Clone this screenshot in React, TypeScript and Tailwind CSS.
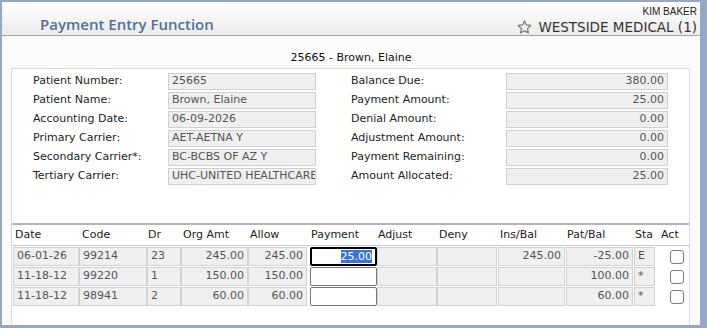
const font = { fontFamily: "'DejaVu Sans', Verdana, sans-serif" };

const leftFields = [
  ["Patient Number:", "25665"],
  ["Patient Name:", "Brown, Elaine"],
  ["Accounting Date:", "06-09-2026"],
  ["Primary Carrier:", "AET-AETNA Y"],
  ["Secondary Carrier*:", "BC-BCBS OF AZ Y"],
  ["Tertiary Carrier:", "UHC-UNITED HEALTHCARE"],
];

const rightFields = [
  ["Balance Due:", "380.00"],
  ["Payment Amount:", "25.00"],
  ["Denial Amount:", "0.00"],
  ["Adjustment Amount:", "0.00"],
  ["Payment Remaining:", "0.00"],
  ["Amount Allocated:", "25.00"],
];

const rows = [
  { date: "06-01-26", code: "99214", dr: "23", org: "245.00", allow: "245.00", pay: "25.00", ins: "245.00", pat: "-25.00", sta: "E" },
  { date: "11-18-12", code: "99220", dr: "1", org: "150.00", allow: "150.00", pay: "", ins: "", pat: "100.00", sta: "*" },
  { date: "11-18-12", code: "98941", dr: "2", org: "60.00", allow: "60.00", pay: "", ins: "", pat: "60.00", sta: "*" },
];

function Cell({ w, right, children }: { w: string; right?: boolean; children?: React.ReactNode }) {
  return (
    <div
      className={`${w} h-[19px] shrink-0 border border-[#d2d2d2] bg-[#efefef] text-[#555] flex items-center overflow-hidden whitespace-nowrap ${right ? "justify-end pr-[3px]" : "pl-[3px]"}`}
    >
      {children}
    </div>
  );
}

function StarIcon() {
  return (
    <svg width="15" height="14" viewBox="0 0 24 23" fill="none" stroke="#7a7a7a" strokeWidth="2" strokeLinejoin="round">
      <path d="M12 1.5l3.1 6.6 7.2.9-5.3 5 1.4 7.1L12 17.6l-6.4 3.5L7 14l-5.3-5 7.2-.9z" />
    </svg>
  );
}

export default function App() {
  return (
    <div className="w-[707px] h-[328px] bg-[#95a7c4] pl-[2px] pt-[2px] pr-[7px] pb-[3px] overflow-hidden" style={font}>
      <div className="h-full bg-[#fbfbfb] flex flex-col">
        <div className="h-[34px] shrink-0 bg-gradient-to-b from-white to-[#ececec] border-b border-[#a3a3a3] flex justify-between">
          <div
            className="pl-[38px] pt-[15px] text-[15px] font-semibold text-[#546f94] leading-none"
            style={{ fontFamily: "'Open Sans', 'Noto Sans', sans-serif" }}
          >
            Payment Entry Function
          </div>
          <div className="pr-[3px] pt-[4px] flex flex-col items-end">
            <div className="text-[10px] leading-[11px] text-[#222]" style={{ fontFamily: "'Liberation Sans', Arial, sans-serif" }}>
              KIM BAKER
            </div>
            <div className="flex items-center gap-[6px] mt-[2px] text-[13.5px] leading-[16px] text-[#333]">
              <StarIcon />
              <span>WESTSIDE MEDICAL (1)</span>
            </div>
          </div>
        </div>

        <div className="text-center text-[11px] text-[#111] mt-[15px] leading-[14px]">25665 - Brown, Elaine</div>

        <div className="flex-1 ml-[9px] mr-[10px] mt-[3px] border border-b-0 border-[#dadada] bg-white flex flex-col text-[11px]">
          <div className="flex pt-[4px] pl-[21px]">
            <div className="flex flex-col gap-[2px]">
              {leftFields.map(([label, value]) => (
                <div key={label} className="flex items-center h-[17px]">
                  <div className="w-[135px] text-[#222]">{label}</div>
                  <div className="w-[148px] h-[17px] border border-[#d0d0d0] bg-[#efefef] text-[#555] pl-[3px] flex items-center overflow-hidden whitespace-nowrap">
                    {value}
                  </div>
                </div>
              ))}
            </div>
            <div className="flex flex-col gap-[2px] ml-[35px]">
              {rightFields.map(([label, value]) => (
                <div key={label} className="flex items-center h-[17px]">
                  <div className="w-[155px] text-[#222]">{label}</div>
                  <div className="w-[162px] h-[17px] border border-[#d0d0d0] bg-[#efefef] text-[#555] pr-[3px] flex items-center justify-end">
                    {value}
                  </div>
                </div>
              ))}
            </div>
          </div>

          <div className="mt-[38px] border-t-2 border-[#b4b4b4]">
            <div className="h-[21px] flex items-center border-b border-[#c8c8c8] text-[#222]">
              <div className="w-[67px] pl-[3px]">Date</div>
              <div className="w-[68px] pl-[3px]">Code</div>
              <div className="w-[34px] pl-[1px]">Dr</div>
              <div className="w-[67px] pl-[2px]">Org Amt</div>
              <div className="w-[62px] pl-[2px]">Allow</div>
              <div className="w-[67px] pl-[1px]">Payment</div>
              <div className="w-[60px] pl-[1px]">Adjust</div>
              <div className="w-[61px] pl-[2px]">Deny</div>
              <div className="w-[68px] pl-[2px]">Ins/Bal</div>
              <div className="w-[68px] pl-[1px]">Pat/Bal</div>
              <div className="w-[26px] pl-[1px]">Sta</div>
              <div className="pl-[1px]">Act</div>
            </div>
            <div className="flex flex-col gap-[1px] pt-[1px]">
              {rows.map((r, i) => (
                <div key={i} className="flex items-center">
                  <Cell w="w-[66px] ml-[1px]">{r.date}</Cell>
                  <Cell w="w-[68px]">{r.code}</Cell>
                  <Cell w="w-[34px]">{r.dr}</Cell>
                  <Cell w="w-[67px]" right>{r.org}</Cell>
                  <Cell w="w-[59px]" right>{r.allow}</Cell>
                  <div
                    className={`w-[67px] h-[19px] ml-[3px] shrink-0 bg-white rounded-[2px] flex items-center justify-end pr-[3px] ${
                      i === 0 ? "border-2 border-black" : "border border-[#767676]"
                    }`}
                  >
                    {r.pay && <span className="bg-[#3a74d8] text-white leading-[13px]">{r.pay}</span>}
                  </div>
                  <Cell w="w-[60px]" />
                  <Cell w="w-[60px]" />
                  <Cell w="w-[67px] ml-[1px]" right>{r.ins}</Cell>
                  <Cell w="w-[67px] ml-[1px]" right>{r.pat}</Cell>
                  <Cell w="w-[21px] ml-[1px]">{r.sta}</Cell>
                  <div className="ml-[15px] w-[14px] h-[14px] border border-[#7a7a7a] rounded-[3px] bg-white" />
                </div>
              ))}
            </div>
          </div>
        </div>
      </div>
    </div>
  );
}
